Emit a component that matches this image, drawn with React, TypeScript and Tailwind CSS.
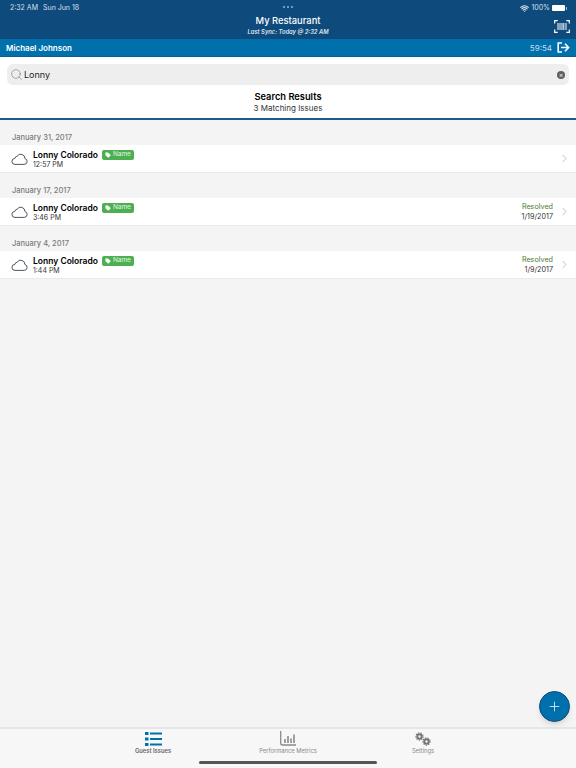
import { ChevronRight, Plus, Search, Tag, Wifi } from "lucide-react";

const issues = [
  { date: "January 31, 2017", time: "12:57 PM" },
  { date: "January 17, 2017", time: "3:46 PM", resolved: "1/19/2017" },
  { date: "January 4, 2017", time: "1:44 PM", resolved: "1/9/2017" },
];

const Cloud = () => (
  <svg width="17" height="12" viewBox="0 0 17 12" fill="none" stroke="#4b5563" strokeWidth="1" className="w-[17px] h-3">
    <path d="M4 11.4h9.2a3 3 0 0 0 .7-5.9A4.2 4.2 0 0 0 6.2 3.1 2.7 2.7 0 0 0 3.9 5.4 3 3 0 0 0 4 11.4z" />
  </svg>
);

const App = () => {
  return (
    <div className="relative h-screen flex flex-col overflow-hidden bg-[#f4f4f4] font-['Inter',sans-serif] text-black">
      {/* Header */}
      <header className="h-[39px] shrink-0 bg-[#0e4a7b] text-white relative">
        <div className="flex justify-between items-center pl-[10px] pr-[9px] pt-[2px] h-[14px] text-[7px] text-[#d5e0ea]">
          <div className="flex gap-[5px]">
            <span>2:32 AM</span>
            <span>Sun Jun 18</span>
          </div>
          <div className="flex items-center gap-[2px]">
            <Wifi size={9} strokeWidth={3} />
            <span>100%</span>
            <div className="w-[13px] h-[6px] rounded-[1px] bg-white" />
            <div className="w-[1px] h-[3px] -ml-[1px] bg-[#9db6cb]" />
          </div>
        </div>
        <div className="text-center leading-none">
          <div className="text-[9.4px] font-medium mt-[1px] leading-[12px]">My Restaurant</div>
          <div className="text-[5.8px] italic font-semibold text-[#dbe5ee] leading-[8px] mt-[1px]">Last Sync: Today @ 2:32 AM</div>
        </div>
        <div className="absolute top-[6px] left-0 right-0 flex justify-center gap-[2px]">
          <span className="w-[2px] h-[2px] rounded-full bg-[#9db6cb]" />
          <span className="w-[2px] h-[2px] rounded-full bg-[#9db6cb]" />
          <span className="w-[2px] h-[2px] rounded-full bg-[#9db6cb]" />
        </div>
        <svg width="16" height="13" viewBox="0 0 16 13" fill="none" stroke="white" className="absolute top-[20px] right-[6px]">
          <path d="M.7 3.5V.7h3M12.3.7h3v2.8M.7 9.5v2.8h3M12.3 12.3h3V9.5" strokeWidth="1.2" />
          <path d="M4 3v7M6 3v7M8 3v7M9.8 3v7M12 3v7" strokeWidth="1" />
        </svg>
      </header>

      {/* User bar */}
      <div className="h-[18px] shrink-0 bg-[#0070ac] text-white flex items-center justify-between pl-[6px] pr-[6px] border-b border-[#0a5f92]">
        <span className="text-[8px] font-semibold">Michael Johnson</span>
        <div className="flex items-center gap-[5px]">
          <span className="text-[8px] text-[#c4dcea]">59:54</span>
          <svg width="13" height="11" viewBox="0 0 13 11" fill="none" stroke="white" strokeWidth="1.6">
            <path d="M5 1H1.2v9H5" />
            <path d="M4 5.5h7.5M8 1.8l3.6 3.7L8 9.2" />
          </svg>
        </div>
      </div>

      {/* Search */}
      <div className="bg-white shrink-0 border-b-2 border-[#1e5a8c] h-[63px]">
        <div className="mx-[7px] mt-[7px] h-[21px] rounded-[6px] bg-[#eeeeee] flex items-center pl-[3px] pr-[4px]">
          <Search size={13} strokeWidth={1} className="text-[#6b6b6b]" />
          <span className="ml-[1px] mt-[1px] text-[9px] text-[#222]">Lonny</span>
          <span className="ml-auto w-2 h-2 rounded-full bg-[#5f5f5f] text-[#eee] flex items-center justify-center text-[7px] leading-none">×</span>
        </div>
        <div className="text-center mt-[6px]">
          <div className="text-[9.3px] font-semibold leading-[12px] mt-[1px]">Search Results</div>
          <div className="text-[8px] text-[#333] leading-[10px]">3 Matching Issues</div>
        </div>
      </div>

      {/* Results */}
      <main className="flex-1 pt-[8px]">
        {issues.map((issue) => (
          <section key={issue.date} className="mb-[8px]">
            <div className="h-[17px] pl-[12px] pt-[2px] text-[7.5px] font-medium text-[#7a7a7a] flex items-center">{issue.date}</div>
            <div className="h-[28px] bg-white border-b border-[#ebebeb] flex items-center pl-[11px] pr-[5px]">
              <div className="mt-[1px]">
                <Cloud />
              </div>
              <div className="ml-[5px] mt-[2px]">
                <div className="flex items-center">
                  <span className="text-[8.5px] font-semibold leading-[11px]">Lonny Colorado</span>
                  <span className="ml-[4px] h-[10px] w-[32px] rounded-[2px] bg-[#4caf50] text-[#e4f5e5] text-[6.5px] flex items-center justify-center gap-[2px] -mt-[1px]">
                    <Tag size={6} fill="white" strokeWidth={1} />
                    Name
                  </span>
                </div>
                <div className="text-[7px] text-[#333] leading-[8px]">{issue.time}</div>
              </div>
              <div className="ml-auto flex items-center">
                {issue.resolved && (
                  <div className="text-right leading-[10px] mt-[1px]">
                    <div className="text-[7.2px] text-[#4d7a33]">Resolved</div>
                    <div className="text-[7.2px] text-[#333]">{issue.resolved}</div>
                  </div>
                )}
                <ChevronRight size={13} strokeWidth={1.2} className="ml-[5px] text-[#a3a3a3]" />
              </div>
            </div>
          </section>
        ))}
      </main>

      {/* Tab bar */}
      <nav className="h-[41px] shrink-0 bg-[#f7f7f7] border-t-2 border-[#e6e6e6] grid grid-cols-3 px-[85.5px] text-[5.8px] text-[#8a8a8a]">
        <div className="flex flex-col items-center pt-[3px]">
          <svg width="17" height="14" viewBox="0 0 17 14" fill="#0070ac">
            <rect x="0" y="0" width="3.5" height="3" />
            <rect x="5" y="0.5" width="12" height="2" />
            <rect x="0" y="5.5" width="3.5" height="3" />
            <rect x="5" y="6" width="12" height="2" />
            <rect x="0" y="11" width="3.5" height="3" />
            <rect x="5" y="11.5" width="12" height="2" />
          </svg>
          <span className="font-semibold text-[#666] leading-[8px] mt-[1px]">Guest Issues</span>
        </div>
        <div className="flex flex-col items-center pt-[2px]">
          <svg width="16" height="15" viewBox="0 0 16 15" fill="none" stroke="#8a8a8a">
            <path d="M.7 0v12a2 2 0 0 0 2 2H16" strokeWidth="1.3" />
            <path d="M5 12V8M8 12V5M11 12V7.5M14 12V3.5" strokeWidth="1.6" />
          </svg>
          <span className="leading-[8px] mt-[1px]">Performance Metrics</span>
        </div>
        <div className="flex flex-col items-center pt-[3px]">
          <svg width="17" height="14" viewBox="0 0 17 14" fill="none" stroke="#777" className="-ml-[2px]">
            <circle cx="5.5" cy="4.5" r="2.2" strokeWidth="2" />
            <circle cx="5.5" cy="4.5" r="3.6" strokeWidth="1.2" strokeDasharray="1.3 1.2" />
            <circle cx="12.5" cy="9.5" r="2.2" strokeWidth="2" />
            <circle cx="12.5" cy="9.5" r="3.6" strokeWidth="1.2" strokeDasharray="1.3 1.2" />
          </svg>
          <span className="leading-[8px] mt-[1px]">Settings</span>
        </div>
      </nav>

      {/* Floating add button */}
      <button className="absolute right-[6px] bottom-[46px] w-[31px] h-[31px] rounded-full bg-[#0070ac] border border-[#0e4a7b] text-white flex items-center justify-center shadow-md">
        <Plus size={15} strokeWidth={1.2} />
      </button>

      {/* Home indicator */}
      <div className="absolute bottom-[4px] left-[199px] w-[178px] h-[3px] rounded-full bg-[#555]" />
    </div>
  );
};

export default App;
